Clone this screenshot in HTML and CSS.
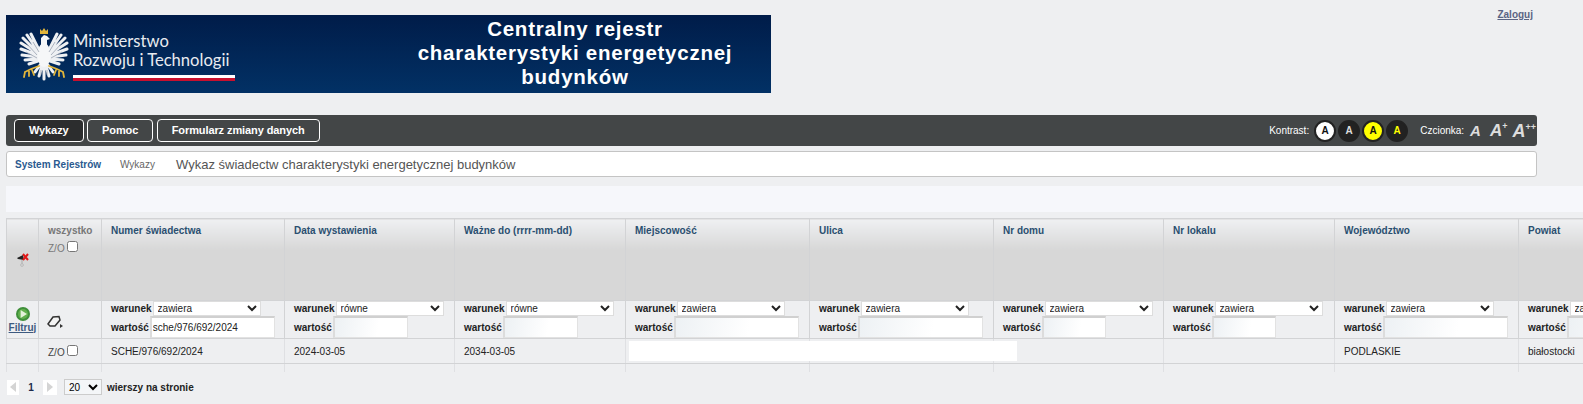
FILE: index.html
```html
<!DOCTYPE html>
<html lang="pl">
<head>
    <meta charset="UTF-8">
    <meta name="viewport" content="width=device-width, initial-scale=1.0">
    <title>Centralny rejestr charakterystyki energetycznej budynków</title>
    <link rel="stylesheet" href="styles.css">
</head>
<body>

<!-- Banner and login -->
<div class="top">
    <div class="banner">
        <div class="logo">
            <svg class="eagle" width="50" height="54" viewBox="0 0 50 54">
                <g fill="none" stroke="#eef0f3" stroke-width="3" stroke-linecap="round">
                    <path d="M20 22 L12 6 M19 23 L8 7 M18 24 L4 10 M18 25 L2 15 M18 27 L2 21 M18 29 L3 27 M18 31 L6 32 M19 33 L10 36"/>
                    <path d="M30 22 L38 6 M31 23 L42 7 M32 24 L46 10 M32 25 L48 15 M32 27 L48 21 M32 29 L47 27 M32 31 L44 32 M31 33 L40 36"/>
                    <path d="M25 38 L25 51 M23 38 L20 48 M27 38 L30 48 M21 37 L16 44 M29 37 L34 44"/>
                </g>
                <ellipse cx="25" cy="27" rx="6.5" ry="12" fill="#f6f7f8"/>
                <path fill="#f6f7f8" d="M22 20 L22 10 L25 7 L28 8 L31 11 L28 12 L28 20 Z"/>
                <path fill="none" stroke="#8f98a8" stroke-width=".7" d="M14 14 L20 24 M8 16 L18 27 M7 24 L18 30 M36 14 L30 24 M42 16 L32 27 M43 24 L32 30 M22 42 L22 47 M28 42 L28 47"/>
                <path fill="#e2b53a" d="M21 1 L23 3 L25 0 L27 3 L29 1 L29 6 L21 6 Z"/>
                <g fill="none" stroke="#e2b53a" stroke-width="1.8" stroke-linecap="round">
                    <path d="M20 38 L12 41 L6 44 M6 44 L5 49 M10 43 L10 48 M13 42 L15 47"/>
                    <path d="M30 38 L38 41 L44 44 M44 44 L45 49 M40 43 L40 48 M37 42 L35 47"/>
                </g>
            </svg>
            <div class="logo-text">
                <div>Ministerstwo</div>
                <div>Rozwoju i Technologii</div>
                <div class="flag"></div>
            </div>
        </div>
        <div class="banner-title">Centralny rejestr<br>charakterystyki energetycznej<br>budynków</div>
    </div>
    <a class="login" href="#">Zaloguj</a>
</div>

<!-- Menu bar -->
<div class="menu">
    <a class="menu-btn active" href="#">Wykazy</a>
    <a class="menu-btn" href="#">Pomoc</a>
    <a class="menu-btn" href="#">Formularz zmiany danych</a>
    <div class="access">
        <span>Kontrast:</span>
        <span class="circles">
            <span class="circle c-white">A</span>
            <span class="circle c-dark">A</span>
            <span class="circle c-yellow">A</span>
            <span class="circle c-darkyellow">A</span>
        </span>
        <span class="font-label">Czcionka:</span>
        <span class="font-a a1">A</span>
        <span class="font-a a2">A<sup>+</sup></span>
        <span class="font-a a3">A<sup>++</sup></span>
    </div>
</div>

<!-- Breadcrumb -->
<div class="crumbs">
    <a class="crumb-root" href="#">System Rejestrów</a>
    <span class="crumb-mid">Wykazy</span>
    <span class="crumb-title">Wykaz świadectw charakterystyki energetycznej budynków</span>
</div>

<div class="strip"></div>

<!-- Results table -->
<div class="table-wrap">
    <table class="grid">
        <colgroup>
            <col class="w-icon"><col class="w-sel"><col class="w-num"><col class="w-date"><col class="w-date2">
            <col class="w-wide"><col class="w-wide"><col class="w-date"><col class="w-date2"><col class="w-wide"><col class="w-last">
        </colgroup>
        <thead>
            <tr class="head">
                <th class="pin-cell">
                    <svg width="14" height="16" viewBox="0 0 14 16">
                        <path fill="#222" d="M1 7 L7 4 L8 9 L2 8 Z"/>
                        <path fill="none" stroke="#aaa" d="M6 9 L6 13"/>
                        <circle cx="6" cy="14" r="1.4" fill="none" stroke="#bbb"/>
                        <path stroke="#e01818" stroke-width="2" d="M7 3 L12 9 M12 3 L7 9"/>
                    </svg>
                </th>
                <th class="all"><div>wszystko</div><div class="zo zo-head">Z/O <input type="checkbox"></div></th>
                <th>Numer świadectwa</th>
                <th>Data wystawienia</th>
                <th>Ważne do (rrrr-mm-dd)</th>
                <th>Miejscowość</th>
                <th>Ulica</th>
                <th>Nr domu</th>
                <th>Nr lokalu</th>
                <th>Województwo</th>
                <th>Powiat</th>
            </tr>
            <tr class="filters">
                <td class="go">
                    <svg width="14" height="14" viewBox="0 0 14 14">
                        <circle cx="7" cy="7" r="7" fill="#3f8f3a"/>
                        <circle cx="7" cy="7" r="5" fill="#62b04e"/>
                        <path fill="#e4f2da" d="M4.6 3 L11 7 L4.6 11 Z"/>
                    </svg>
                    <a href="#">Filtruj</a>
                </td>
                <td class="eraser">
                    <svg width="16" height="14" viewBox="0 0 16 14">
                        <path fill="#f4f4f4" stroke="#333" stroke-width="1.5" d="M1 9 L6 2 L12 1.5 L13 5 L8 11 L3 11 Z"/>
                        <path fill="#333" d="M13 9 L16 11 L13 13 Z"/>
                    </svg>
                </td>
                <td>
                    <div class="f-row"><b>warunek</b><select><option>zawiera</option></select></div>
                    <div class="f-row"><b>wartość</b><input class="in-text filled" type="text" value="sche/976/692/2024"></div>
                </td>
                <td>
                    <div class="f-row"><b>warunek</b><select><option>równe</option></select></div>
                    <div class="f-row"><b>wartość</b><input class="in-date" type="text"></div>
                </td>
                <td>
                    <div class="f-row"><b>warunek</b><select><option>równe</option></select></div>
                    <div class="f-row"><b>wartość</b><input class="in-date" type="text"></div>
                </td>
                <td>
                    <div class="f-row"><b>warunek</b><select><option>zawiera</option></select></div>
                    <div class="f-row"><b>wartość</b><input class="in-text" type="text"></div>
                </td>
                <td>
                    <div class="f-row"><b>warunek</b><select><option>zawiera</option></select></div>
                    <div class="f-row"><b>wartość</b><input class="in-text" type="text"></div>
                </td>
                <td>
                    <div class="f-row"><b>warunek</b><select><option>zawiera</option></select></div>
                    <div class="f-row"><b>wartość</b><input class="in-nr" type="text"></div>
                </td>
                <td>
                    <div class="f-row"><b>warunek</b><select><option>zawiera</option></select></div>
                    <div class="f-row"><b>wartość</b><input class="in-nr" type="text"></div>
                </td>
                <td>
                    <div class="f-row"><b>warunek</b><select><option>zawiera</option></select></div>
                    <div class="f-row"><b>wartość</b><input class="in-text" type="text"></div>
                </td>
                <td>
                    <div class="f-row"><b>warunek</b><select><option>zawiera</option></select></div>
                    <div class="f-row"><b>wartość</b><input class="in-text" type="text"></div>
                </td>
            </tr>
        </thead>
        <tbody>
            <tr class="data">
                <td></td>
                <td><span class="zo">Z/O <input type="checkbox"></span></td>
                <td>SCHE/976/692/2024</td>
                <td>2024-03-05</td>
                <td>2034-03-05</td>
                <td></td>
                <td></td>
                <td></td>
                <td></td>
                <td>PODLASKIE</td>
                <td>białostocki</td>
            </tr>
            <tr class="blank">
                <td></td><td></td><td></td><td></td><td></td><td></td><td></td><td></td><td></td><td></td><td></td>
            </tr>
        </tbody>
    </table>
    <div class="redacted"></div>
</div>

<!-- Paging -->
<div class="pager">
    <span class="page-btn"><svg width="6" height="10" viewBox="0 0 6 10"><path fill="#d4d4d4" d="M6 0 L6 10 L0 5 Z"/></svg></span>
    <b class="page-no">1</b>
    <span class="page-btn next"><svg width="6" height="10" viewBox="0 0 6 10"><path fill="#d4d4d4" d="M0 0 L0 10 L6 5 Z"/></svg></span>
    <select class="page-size"><option>20</option></select>
    <b>wierszy na stronie</b>
</div>

</body>
</html>
```

FILE: styles.css
```css
html, body {
    overflow: hidden;
}
body {
    margin: 0;
    height: 404px;
    font-family: "Liberation Sans", Arial, sans-serif;
    font-size: 10px;
    color: #222;
    background-color: #eeeff1;
}

/* banner */
.top {
    display: flex;
    justify-content: space-between;
    padding: 15px 50px 0 6px;
}
.banner {
    display: flex;
    width: 765px;
    height: 78px;
    background: linear-gradient(#001c49, #023165);
    color: #fff;
}
.logo {
    display: flex;
    width: 373px;
    padding: 13px 0 0 13px;
    box-sizing: border-box;
}
.eagle {
    margin-right: 4px;
}
.logo-text {
    font-family: Lato, sans-serif;
    font-size: 16.6px;
    line-height: 18.5px;
    padding-top: 4px;
    color: #e8ebf0;
}
.flag {
    width: 162px;
    height: 3px;
    margin-top: 6px;
    background: #fff;
    border-bottom: 3px solid #c8102e;
}
.banner-title {
    width: 392px;
    padding-top: 2px;
    text-align: center;
    font-weight: 700;
    font-size: 20.5px;
    letter-spacing: .75px;
    line-height: 24px;
}
.login {
    margin-top: -6px;
    height: 12px;
    font-weight: bold;
    color: #5a6384;
}

/* menu bar */
.menu {
    display: flex;
    align-items: center;
    height: 31px;
    margin: 22px 46px 0 6px;
    padding: 0 8px;
    background-color: #434647;
    border-radius: 3px;
}
.menu-btn {
    margin-right: 3.5px;
    padding: 0 14px;
    line-height: 21px;
    border: 1px solid #fff;
    border-radius: 4px;
    font-size: 11px;
    font-weight: bold;
    letter-spacing: -.1px;
    color: #fff;
    text-decoration: none;
}
.menu-btn.active {
    background-color: #2c2d2e;
}
.access {
    display: flex;
    align-items: center;
    margin-left: auto;
    color: #fff;
}
.circles {
    display: flex;
    gap: 2px;
    margin: 0 12px 0 5px;
}
.circle {
    width: 22px;
    height: 22px;
    box-sizing: border-box;
    border: 2px solid #222;
    border-radius: 50%;
    text-align: center;
    line-height: 18px;
    font-weight: bold;
    background-color: #222;
}
.c-white { background-color: #fff; color: #111; }
.c-dark { color: #ddd; }
.c-yellow { background-color: #ff0; color: #111; }
.c-darkyellow { color: #ff0; }
.font-label {
    margin-right: 6px;
}
.font-a {
    font-style: italic;
    font-weight: bold;
    color: #ddd;
    line-height: 20px;
}
.font-a sup {
    font-size: 9px;
    font-style: normal;
    line-height: 0;
}
.a1 { font-size: 15px; margin-right: 9px; }
.a2 { font-size: 17px; margin-right: 5px; }
.a3 { font-size: 18px; margin-right: -7px; }

/* breadcrumb */
.crumbs {
    display: flex;
    align-items: center;
    height: 24px;
    margin: 5px 46px 0 6px;
    padding-left: 8px;
    background-color: #fff;
    border: 1px solid #c4c4c4;
    border-radius: 3px;
}
.crumb-root {
    width: 105px;
    font-weight: bold;
    color: #2a5a8f;
    text-decoration: none;
}
.crumb-mid {
    width: 56px;
    color: #666;
}
.crumb-title {
    font-size: 13px;
    color: #555;
}

.strip {
    height: 26px;
    margin: 9px 0 0 6px;
    background-color: #f6f7fb;
}

/* table */
.table-wrap {
    position: relative;
    margin: 6px 0 0 6px;
    overflow: hidden;
}
.grid {
    width: 1700px;
    table-layout: fixed;
    border-collapse: collapse;
}
.w-icon { width: 32px; }
.w-sel { width: 63px; }
.w-num { width: 183px; }
.w-date { width: 170px; }
.w-date2 { width: 171px; }
.w-wide { width: 184px; }
.w-last { width: 243px; }
.grid th,
.grid td {
    padding: 0 0 0 9px;
    border: 1px solid #d2d3d5;
    text-align: left;
}
.head th {
    height: 75px;
    padding-top: 6px;
    vertical-align: top;
    font-size: 10px;
    color: #2a4f70;
    background: linear-gradient(#eff0f2, #d7d7d7 38%);
}
.head .pin-cell {
    padding: 0;
    text-align: center;
    vertical-align: middle;
}
.head .all {
    color: #777;
}
.zo {
    color: #444;
}
.zo-head {
    margin-top: 5px;
    color: #777;
    font-weight: normal;
}
.zo input {
    width: 11px;
    height: 11px;
    margin: 0;
}
.filters td {
    padding-left: 9px;
    vertical-align: bottom;
    white-space: nowrap;
}
.filters .go {
    padding: 0;
    text-align: center;
    vertical-align: middle;
    line-height: 11px;
}
.go svg {
    display: block;
    margin: 0 auto 1px;
}
.go a {
    font-weight: bold;
    color: #3d5a80;
}
.filters .eraser {
    vertical-align: bottom;
    padding: 0 0 7px 8px;
}
.f-row {
    display: flex;
    align-items: center;
    gap: 1px;
    color: #222;
}
.f-row select {
    width: 108px;
    height: 15px;
    padding: 0;
    font-family: inherit;
    font-size: 10px;
    color: #222;
    background-color: #fff;
    border: 1px solid #ddd;
    border-radius: 0;
}
.f-row input {
    height: 22px;
    padding: 0 1px;
    box-sizing: border-box;
    font-family: inherit;
    font-size: 10px;
    color: #222;
    background: linear-gradient(100deg, #edf1f4, #fff 60%);
    border: 1px solid #e2e2e2;
    border-top: 2px solid #d0d0d0;
    border-left: 2px solid #dcdcdc;
}
.f-row input.filled {
    background: #fff;
}
.in-text { width: 125px; }
.in-date { width: 75px; }
.in-nr { width: 64px; }
.data td {
    height: 24px;
}
.data td,
.blank td {
    border-left-color: #dfe0e3;
    border-right-color: #dfe0e3;
}
.blank td {
    height: 8px;
    border-bottom: none;
}
.redacted {
    position: absolute;
    left: 623px;
    top: 123px;
    width: 388px;
    height: 20px;
    background-color: #fff;
}

/* paging */
.pager {
    display: flex;
    align-items: center;
    height: 16px;
    margin: 7px 0 0 7px;
}
.page-btn {
    display: flex;
    align-items: center;
    justify-content: center;
    width: 12px;
    height: 15px;
    background-color: #fff;
}
.page-btn.next {
    width: 14px;
}
.page-no {
    width: 24px;
    text-align: center;
    color: #1c2a4a;
}
.page-size {
    width: 38px;
    height: 16px;
    margin: 0 5px 0 7px;
    padding: 0;
    font-family: inherit;
    font-size: 10px;
    background-color: #f4f6f8;
    border: 1px solid #ccc;
    border-radius: 0;
}
```
